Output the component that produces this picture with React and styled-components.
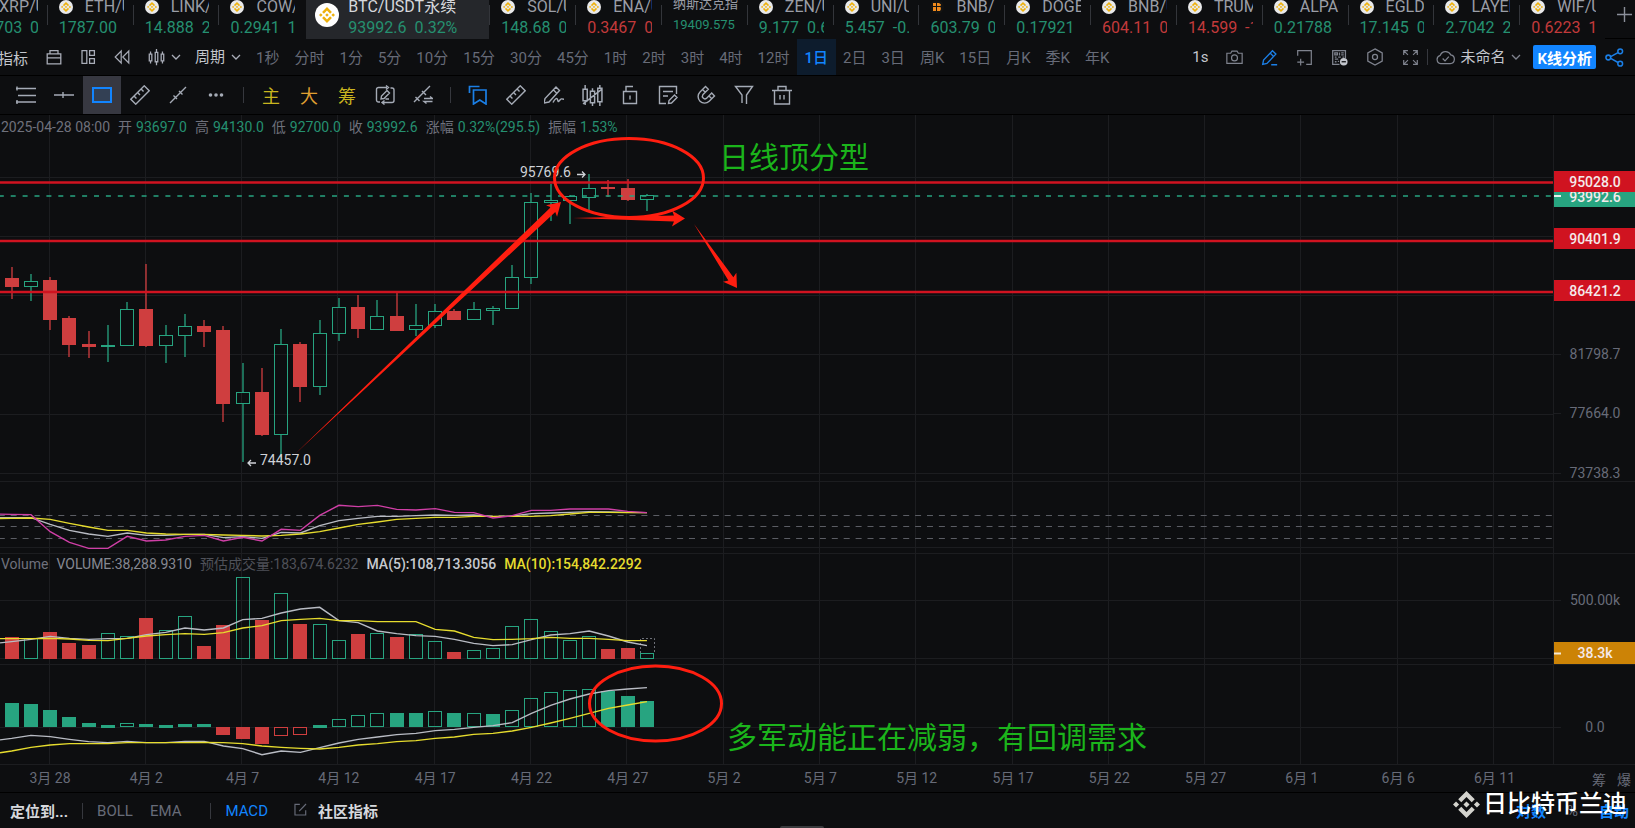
import React from 'react';
import styled, { createGlobalStyle } from 'styled-components';
import { SiBinance } from 'react-icons/si';

const GlobalStyle = createGlobalStyle`
    * {
        box-sizing: border-box;
    }

    body {
        margin: 0;
        background: #0d0e10;
        color: #8b8f9a;
        font-family: Roboto, "Noto Sans CJK SC", sans-serif;
        font-size: 14px;
        overflow-x: hidden;
    }

    button, select {
        margin: 0;
        padding: 0;
        border: 0;
        background: none;
        color: inherit;
        font: inherit;
        cursor: pointer;
    }
`;

const UP = '#27a480';
const DOWN = '#cf3e3f';
const GRID = '#1c1d20';
const MARK = '#ff1e10';
const LEVEL = '#d01320';

const Page = styled.div`
    position: relative;
    display: flex;
    flex-direction: column;
    min-height: 100vh;
    overflow: hidden;
`;

/* ---------- tickers ---------- */

const TickerBar = styled.nav`
    display: flex;
    height: 39px;
    overflow: hidden;
`;

const TickerList = styled.div`
    flex: 1;
    min-width: 0;
    display: flex;
    margin-left: -39px;
`;

const Ticker = styled.button`
    flex: 1 1 0;
    min-width: 0;
    display: flex;
    text-align: left;

    &::before {
        content: "";
        flex: none;
        width: 1px;
        height: 20px;
        margin: 5px 11px 0 0;
        background: #33353a;
    }
`;

const TickerBody = styled.span`
    flex: 1;
    min-width: 0;
    height: 39px;
    margin-right: 9px;
    overflow: hidden;
    display: flex;
    flex-direction: column;
    justify-content: flex-end;
    gap: 1px;
    padding-bottom: ${(p) => (p.$small ? '4px' : '1px')};
    font-size: ${(p) => (p.$small ? '13px' : '16px')};
    line-height: 20px;
    white-space: pre;
`;

const TickerName = styled.span`
    display: flex;
    gap: 12px;
    color: ${(p) => (p.$active ? '#d6d8dc' : '#9b9ea7')};
`;

const TickerPrice = styled.span`
    color: ${(p) => (p.$down ? '#c23a3b' : '#259070')};
`;

const ActiveTicker = styled.button`
    flex: none;
    width: 183px;
    margin-left: 2px;
    padding-left: 9px;
    display: flex;
    gap: 9px;
    background: #25272b;
    text-align: left;
`;

const Coin = styled.span`
    flex: none;
    display: flex;
    align-items: center;
    justify-content: center;
    width: ${(p) => p.$size}px;
    height: ${(p) => p.$size}px;
    border-radius: 50%;
    background: ${(p) => (p.$dark ? '#131313' : '#e9e9ea')};
    color: ${(p) => (p.$dark ? '#f08a1c' : '#eeb10c')};
`;

const SmallCoin = styled(Coin)`
    align-self: center;
`;

const ActiveCoin = styled(Coin)`
    margin-top: 3px;
    background: #fff;
`;

const AddButton = styled.button`
    width: 30px;
    display: flex;
    align-items: center;
    justify-content: center;
    padding: 0 0 9px 9px;
    border-bottom: 1px solid #000;
    color: #8b8f9a;
`;

/* ---------- toolbars ---------- */

const Toolbar = styled.div`
    display: flex;
    align-items: stretch;
    border-bottom: 1px solid #000;
`;

const PeriodBar = styled(Toolbar)`
    height: 37px;
    font-size: 15px;
`;

const DrawBar = styled(Toolbar)`
    height: 39px;
    padding-left: 7px;
`;

const BarGroup = styled.div`
    display: flex;
    align-items: center;
    gap: ${(p) => p.$gap || 0}px;
    margin-left: ${(p) => p.$left || 0}px;
    color: ${(p) => p.$color || '#a9adb8'};
    white-space: nowrap;
`;

const IconButton = styled.button`
    display: flex;
    align-items: center;
    gap: 6px;
    color: ${(p) => p.$color || 'inherit'};
`;

const Picker = styled.label`
    display: flex;
    align-items: center;
    gap: 5px;

    select {
        appearance: none;
        color: #c3c6cd;
    }
`;

const Period = styled.button`
    align-self: stretch;
    padding: 0 8px 2px 7px;
    color: ${(p) => (p.$active ? '#1285ff' : '#676b78')};
    background: ${(p) => (p.$active ? '#0d1c2d' : 'none')};
    font-weight: ${(p) => (p.$active ? 500 : 400)};
`;

const RightGroup = styled(BarGroup)`
    margin-left: auto;
    padding-right: 8px;
    font-size: 15px;
`;

const Analyse = styled.button`
    height: 24px;
    margin-left: 12px;
    margin-right: 9px;
    padding: 0 4px;
    border-radius: 2px;
    background: #1285ff;
    color: #fff;
    font-weight: 600;
`;

const Divider = styled.span`
    flex: none;
    width: 1px;
    height: 16px;
    background: #36383e;
    margin: 0 ${(p) => p.$gap}px;
`;

const Tool = styled.button`
    display: flex;
    align-items: center;
    justify-content: center;
    width: 38px;
    height: 38px;
    font-size: 18px;
    color: ${(p) => p.$color || '#a5abb6'};
    background: ${(p) => (p.$active ? '#373841' : 'none')};
`;

/* ---------- chart ---------- */

const Chart = styled.main`
    display: flex;
    flex-direction: column;
`;

const Panel = styled.section`
    position: relative;
    display: flex;
    height: ${(p) => p.$height}px;
    border-bottom: 1px solid ${GRID};
`;

const Plot = styled.svg`
    flex: 1;
    min-width: 0;
    width: 0;
    height: 100%;
    overflow: visible;
    font-size: 14px;
`;

const Axis = styled.svg`
    flex: none;
    width: 82px;
    height: 100%;
    border-left: 1px solid ${GRID};
    background: #0d0e10;
    font-size: 14px;
    fill: #676b78;
`;

const Legend = styled.div`
    position: absolute;
    top: ${(p) => p.$top || 0}px;
    left: 1px;
    display: flex;
    gap: 8px;
    line-height: 20px;
    color: #6f717c;
    white-space: nowrap;

    b {
        margin-left: 4px;
        font-weight: 400;
        color: #259070;
    }
`;

const LegendItem = styled.span`
    color: ${(p) => p.$color || 'inherit'};
    font-weight: ${(p) => (p.$strong ? 500 : 400)};
`;

const TimeAxis = styled.div`
    display: flex;
    height: 28px;
    border-bottom: 1px solid #000;
`;

const TimeTools = styled.div`
    flex: none;
    width: 82px;
    display: flex;
    align-items: center;
    justify-content: flex-end;
    gap: 11px;
    padding-right: 4px;
    color: #676b78;
`;

/* ---------- bottom bar ---------- */

const BottomBar = styled.footer`
    display: flex;
    align-items: center;
    height: 35px;
    padding: 0 6px 0 10px;
    font-size: 15px;
`;

const BottomButton = styled.button`
    margin-right: ${(p) => p.$right || 0}px;
    color: ${(p) => p.$color || '#676b78'};
    font-weight: ${(p) => (p.$bold ? 700 : 400)};
`;

const BottomRight = styled.div`
    display: flex;
    gap: 21px;
    margin-left: auto;
`;

const Handle = styled.span`
    position: absolute;
    bottom: 0;
    left: 50%;
    width: 44px;
    height: 2px;
    margin-left: -38px;
    border-radius: 2px 2px 0 0;
    background: #3a3b3e;
`;

const Watermark = styled.div`
    position: absolute;
    right: 8px;
    bottom: 6px;
    display: flex;
    align-items: center;
    gap: 3px;
    color: #fff;
    font-size: 24px;
    font-weight: 500;
    line-height: 36px;
    pointer-events: none;

    svg {
        color: #d3d3cd;
    }
`;

const Icon = ({ size = 20, w = 1.4, children }) => (
    <svg width={size} height={size} viewBox="0 0 20 20" fill="none" stroke="currentColor" strokeWidth={w}>
        {children}
    </svg>
);

const Chevron = () => (
    <svg width="10" height="6" viewBox="0 0 10 6" fill="none" stroke="currentColor" strokeWidth="1.3">
        <path d="M1 1l4 4 4-4" />
    </svg>
);

const Ruler = () => (
    <Icon>
        <g transform="rotate(-45 10 10)">
            <rect x="0.5" y="6.5" width="19" height="7" />
            <path d="M5 6.5v3.5M10 6.5v3.5M15 6.5v3.5" />
        </g>
    </Icon>
);

const tickers = [
    { name: 'XRP/USDT', price: '2.2703  0.21%' },
    { name: 'ETH/USDT', price: '1787.00' },
    { name: 'LINK/USDT', price: '14.888  2.1%' },
    { name: 'COW/USDT', price: '0.2941  1.2%' },
    { name: 'BTC/USDT永续', price: '93992.6  0.32%', active: true },
    { name: 'SOL/USDT', price: '148.68  0.4%' },
    { name: 'ENA/USDT', price: '0.3467  0.8%', down: true },
    { name: '纳斯达克指数', price: '19409.575', small: true },
    { name: 'ZEN/USDT', price: '9.177  0.6%' },
    { name: 'UNI/USDT', price: '5.457  -0.3%' },
    { name: 'BNB/USDT', price: '603.79  0.1%', dark: true },
    { name: 'DOGE/USDT', price: '0.17921' },
    { name: 'BNB/USDT', price: '604.11  0.1%', down: true },
    { name: 'TRUMP/USDT', price: '14.599  -1%', down: true },
    { name: 'ALPACA/USDT', price: '0.21788' },
    { name: 'EGLD/USDT', price: '17.145  0.9%' },
    { name: 'LAYER/USDT', price: '2.7042  2.6%' },
    { name: 'WIF/USDT', price: '0.6223  1.7%', down: true },
];

const periods = [
    '1秒', '分时', '1分', '5分', '10分', '15分', '30分', '45分', '1时', '2时', '3时', '4时', '12时',
    '1日', '2日', '3日', '周K', '15日', '月K', '季K', '年K',
];

const STEP = 19.25;
const cx = (i) => 11.7 + i * STEP;

// [direction, high, body top, body bottom, low]
const candles = [
    [-1, 152, 163, 172, 184], [1, 159, 166, 172, 186], [-1, 162, 165, 205, 215], [-1, 201, 203, 230, 242],
    [-1, 216, 229, 232, 243], [1, 210, 230, 232, 247], [1, 187, 194, 231, 231], [-1, 149, 194, 231, 232],
    [1, 210, 220, 231, 248], [1, 199, 211, 221, 242], [-1, 205, 211, 217, 232], [-1, 211, 215, 289, 307],
    [1, 248, 277, 289, 347], [-1, 253, 277, 320, 321], [1, 214, 229, 320, 345], [-1, 227, 229, 272, 287],
    [1, 205, 218, 272, 280], [1, 183, 192, 219, 226], [-1, 180, 192, 214, 223], [1, 185, 201, 215, 215],
    [-1, 178, 201, 216, 216], [1, 189, 210, 215, 221], [1, 189, 196, 211, 213], [-1, 194, 196, 205, 205],
    [1, 187, 194, 205, 205], [1, 191, 193, 196, 210], [1, 150, 162, 194, 194], [1, 78, 87, 163, 169],
    [1, 69, 85, 88, 106], [1, 80, 81, 86, 109], [1, 59, 73, 83, 95], [-1, 65, 72, 74, 82],
    [-1, 64, 73, 85, 86], [1, 79, 80, 85, 96],
];

// the indicator series below share one scale, three units to a pixel
const toY = (v, top) => v / 3 - top;

const kdj = {
    j: [118, 119, 170, 202, 220, 220, 184, 198, 195, 184, 181, 198, 187, 198, 163, 166, 121, 91, 95, 91, 103, 105, 101, 112, 113, 129, 122, 106, 106, 102, 102, 102, 109, 113],
    k: [128, 128, 148, 166, 177, 184, 174, 181, 181, 178, 178, 188, 185, 190, 172, 174, 152, 137, 130, 124, 124, 122, 120, 121, 120, 125, 123, 116, 114, 112, 110, 111, 112, 113],
    d: [130, 129, 133, 145, 156, 166, 166, 174, 177, 178, 178, 180, 181, 183, 181, 177, 170, 159, 148, 141, 133, 130, 127, 127, 124, 124, 124, 124, 122, 117, 112, 112, 113, 113],
};

const volume = {
    bars: [485, 490, 470, 503, 510, 475, 482, 428, 466, 424, 514, 450, 307, 435, 353, 447, 448, 496, 478, 475, 485, 476, 499, 531, 524, 518, 454, 433, 467, 496, 482, 523, 520, 535],
    ma5: [500, 493, 484, 490, 493, 491, 490, 479, 472, 459, 465, 459, 434, 430, 414, 402, 397, 437, 443, 468, 476, 482, 484, 493, 505, 512, 509, 494, 480, 476, 468, 483, 501, 512],
    ma10: [491, 491, 490, 492, 496, 497, 490, 483, 479, 476, 478, 473, 459, 452, 437, 433, 430, 437, 437, 440, 440, 440, 463, 468, 487, 494, 493, 491, 487, 490, 490, 493, 497, 497],
};

const macd = {
    // [direction, top, bottom, filled]
    bars: [
        [1, 684, 755, 1], [1, 688, 755, 1], [1, 705, 755, 1], [1, 727, 755, 1], [1, 745, 755, 1], [1, 750, 759, 1],
        [1, 745, 755, 0], [1, 748, 756, 1], [1, 750, 759, 1], [1, 748, 756, 1], [1, 748, 756, 1], [-1, 755, 780, 1],
        [-1, 755, 792, 1], [-1, 755, 808, 1], [-1, 755, 783, 0], [-1, 755, 779, 0], [1, 750, 759, 1], [1, 732, 755, 0],
        [1, 720, 755, 0], [1, 713, 755, 0], [1, 713, 755, 1], [1, 713, 755, 1], [1, 709, 755, 0], [1, 713, 755, 1],
        [1, 714, 755, 0], [1, 717, 755, 1], [1, 706, 755, 0], [1, 670, 755, 0], [1, 652, 755, 0], [1, 646, 755, 0],
        [1, 642, 755, 0], [1, 648, 755, 1], [1, 663, 755, 1], [1, 678, 755, 1],
    ],
    dif: [790, 781, 785, 793, 800, 803, 799, 803, 803, 799, 799, 813, 821, 839, 828, 832, 818, 804, 793, 786, 779, 775, 767, 763, 757, 752, 743, 715, 691, 672, 657, 647, 642, 638],
    dea: [828, 817, 810, 806, 806, 806, 803, 803, 803, 803, 802, 803, 806, 813, 817, 820, 822, 817, 810, 806, 800, 797, 790, 786, 778, 775, 768, 757, 744, 730, 715, 700, 690, 680],
};

const dates = [
    '3月 28', '4月 2', '4月 7', '4月 12', '4月 17', '4月 22', '4月 27', '5月 2', '5月 7', '5月 12',
    '5月 17', '5月 22', '5月 27', '6月 1', '6月 6', '6月 11',
];

const Grid = ({ rows }) => (
    <g stroke={GRID} shapeRendering="crispEdges">
        {dates.map((d, i) => (
            <line key={d} x1={49 + i * 96.3} x2={49 + i * 96.3} y1="0" y2="100%" />
        ))}
        {rows.map((y) => (
            <line key={y} x1="0" x2="100%" y1={y} y2={y} />
        ))}
    </g>
);

const Line = ({ values, top, color }) => (
    <polyline
        fill="none"
        stroke={color}
        strokeWidth="1.4"
        points={[`0,${toY(values[0] + (values[0] - values[1]) / 2, top)}`]
            .concat(values.map((v, i) => `${cx(i)},${toY(v, top)}`))
            .join(' ')}
    />
);

const Bar = ({ i, y1, y2, up, filled }) => (
    <rect
        x={Math.round(cx(i) - 7) + (filled ? 0 : 0.5)}
        y={y1 + (filled ? 0 : 0.5)}
        width={filled ? 14 : 13}
        height={Math.max(y2 - y1 - (filled ? 0 : 1), 1)}
        fill={filled ? (up ? UP : DOWN) : 'none'}
        stroke={filled ? 'none' : up ? UP : DOWN}
    />
);

const Candle = ({ i, data: [dir, high, top, bottom, low] }) => {
    const color = dir > 0 ? UP : DOWN;
    const x = Math.round(cx(i) - 7) + 7;
    return (
        <g>
            <path d={`M${x} ${high}V${top}M${x} ${bottom}V${low}`} stroke={color} strokeWidth="1.3" />
            <Bar i={i} y1={top} y2={bottom} up={dir > 0} filled={dir < 0 || bottom - top < 3} />
        </g>
    );
};

// tapered arrow: a point at the tail, widening towards the head
const Arrow = ({ from, to, head = 13, wing = 8, neck = 3 }) => {
    const len = Math.hypot(to[0] - from[0], to[1] - from[1]);
    const ux = (to[0] - from[0]) / len;
    const uy = (to[1] - from[1]) / len;
    const at = (back, side) => `${to[0] - ux * back - uy * side},${to[1] - uy * back + ux * side}`;
    return (
        <polygon
            fill={MARK}
            points={[from.join(','), at(head - 2, neck), at(head, wing), to.join(','), at(head, -wing), at(head - 2, -neck)].join(' ')}
        />
    );
};

const Tag = ({ y, height = 21, color, text }) => (
    <g>
        <rect x="-1" y={y} width="83" height={height} fill={color} />
        <text x="41" y={y + height / 2 + 5} textAnchor="middle" fill="#f4e9ea" fontWeight="500">
            {text}
        </text>
    </g>
);

const AxisLabel = ({ y, children }) => (
    <g>
        <line x1="0" x2="7" y1={y} y2={y} stroke={GRID} shapeRendering="crispEdges" />
        <text x="41" y={y + 5} textAnchor="middle">
            {children}
        </text>
    </g>
);

const Tickers = () => (
    <TickerBar aria-label="行情">
        <TickerList>
            {tickers.map((t, i) =>
                t.active ? (
                    <ActiveTicker key={i}>
                        <ActiveCoin $size={24}>
                            <SiBinance size={16} />
                        </ActiveCoin>
                        <TickerBody>
                            <TickerName $active>{t.name}</TickerName>
                            <TickerPrice>{t.price}</TickerPrice>
                        </TickerBody>
                    </ActiveTicker>
                ) : (
                    <Ticker key={i}>
                        <TickerBody $small={t.small}>
                            <TickerName>
                                {!t.small && (
                                    <SmallCoin $size={14} $dark={t.dark}>
                                        {t.dark ? (
                                            <svg width="8" height="8" viewBox="0 0 8 8" fill="currentColor">
                                                <path d="M0 0h3v3H0zM4 0h2l2 1.500L7.500 3H4zM0 4h3v4H0zM4 4h3.500L8 6 7 8H4z" />
                                            </svg>
                                        ) : (
                                            <SiBinance size={10} />
                                        )}
                                    </SmallCoin>
                                )}
                                {t.name}
                            </TickerName>
                            <TickerPrice $down={t.down}>{t.price}</TickerPrice>
                        </TickerBody>
                    </Ticker>
                )
            )}
        </TickerList>
        <AddButton aria-label="添加">
            <svg width="15" height="15" viewBox="0 0 15 15" stroke="currentColor" strokeWidth="1.4">
                <path d="M7.500 0v15M0 7.500h15" />
            </svg>
        </AddButton>
    </TickerBar>
);

const Periods = () => (
    <PeriodBar>
        <BarGroup $gap={18} $left={-2}>
            <IconButton $color="#c3c6cd">指标</IconButton>
            <IconButton aria-label="模板">
                <Icon size={16} w={1.6}>
                    <path d="M1.500 6h17v12.500h-17zM5 6V2h10v4M1.500 11h17" />
                </Icon>
            </IconButton>
            <IconButton aria-label="布局">
                <Icon size={16} w={1.6}>
                    <path d="M2.500 2h6v16h-6zM12 2h6v6h-6zM12 12h6v6h-6z" />
                </Icon>
            </IconButton>
            <IconButton aria-label="回放">
                <Icon size={16} w={1.5}>
                    <path d="M9 2.500v15L1.500 10zM18.500 2.500v15L11 10z" />
                </Icon>
            </IconButton>
            <IconButton aria-label="图表类型">
                <Icon size={17} w={1.5}>
                    <path d="M3 3v3M3 14v3M1.500 6h3v8h-3zM10 0v4M10 15v4M8.500 4h3v11h-3zM17 3v3M17 14v3M15.500 6h3v8h-3z" />
                </Icon>
                <Chevron />
            </IconButton>
        </BarGroup>
        <BarGroup $left={14}>
            <Picker>
                <select aria-label="周期">
                    <option>周期</option>
                </select>
                <Chevron />
            </Picker>
        </BarGroup>
        <BarGroup $left={8}>
            {periods.map((p) => (
                <Period key={p} $active={p === '1日'}>
                    {p}
                </Period>
            ))}
        </BarGroup>
        <RightGroup $gap={18} $color="#7f838e">
            <IconButton $color="#c3c6cd">1s</IconButton>
            <IconButton aria-label="截图">
                <Icon size={17}>
                    <path d="M1 5h4.500L7 2.500h6L14.500 5H19v12H1z" />
                    <circle cx="10" cy="10.500" r="3.500" />
                </Icon>
            </IconButton>
            <IconButton aria-label="画线" $color="#1b7fe6">
                <Icon size={17} w={1.6}>
                    <path d="M2 18l1-5L13.500 2l4 4L7 17zM11 5l4 4M12 18.500h7" />
                </Icon>
            </IconButton>
            <IconButton aria-label="新窗口">
                <Icon size={17}>
                    <path d="M2 8V2h16v16h-6M5.500 11.500v8M1.500 15.500h8" />
                </Icon>
            </IconButton>
            <IconButton aria-label="数据">
                <Icon size={17} w={1.5}>
                    <path d="M10 18H2V2h15v9M4.500 4.500h3v2.500h-3zM10 4v3.500M12 4.500h3M12 7h3M4.500 9.500h2M8.500 9.500h3M13.500 9.500h2M4.500 12h4M4.500 15h2M8 14.500h1.500" />
                    <circle cx="15" cy="15" r="4.500" fill="#c3c6cd" stroke="none" />
                    <path d="M12.500 15h5" stroke="#0d0e10" />
                </Icon>
            </IconButton>
            <IconButton aria-label="设置">
                <Icon size={18}>
                    <path d="M10 1l8 4.500v9L10 19l-8-4.500v-9z" />
                    <circle cx="10" cy="10" r="2.800" />
                </Icon>
            </IconButton>
            <IconButton aria-label="全屏">
                <Icon size={17}>
                    <path d="M2 7V2h5M2 2l5 5M13 2h5v5M18 2l-5 5M2 13v5h5M2 18l5-5M18 13v5h-5M18 18l-5-5" />
                </Icon>
            </IconButton>
        </RightGroup>
        <BarGroup>
            <Divider $gap={0} />
        </BarGroup>
        <BarGroup $left={8} $color="#7f838e">
            <Picker>
                <Icon size={19} w={1.3}>
                    <path d="M5 16.500a4.500 4.500 0 0 1-.5-8.800 6 6 0 0 1 11-.5 4.700 4.700 0 0 1-.5 9.300zM7 11l2.500 2.500 4-4.500" />
                </Icon>
                <select aria-label="布局名称">
                    <option>未命名</option>
                </select>
                <Chevron />
            </Picker>
            <Analyse>K线分析</Analyse>
            <IconButton aria-label="分享" $color="#1b7fe6">
                <Icon size={19} w={1.6}>
                    <circle cx="3.500" cy="10" r="2.500" />
                    <circle cx="16" cy="3.500" r="2.500" />
                    <circle cx="16" cy="16.500" r="2.500" />
                    <path d="M6 9l7.700-4.200M6 11l7.700 4.300" />
                </Icon>
            </IconButton>
        </BarGroup>
        <BarGroup $left={11} />
    </PeriodBar>
);

const DrawTools = () => (
    <DrawBar>
        <Tool aria-label="列表">
            <Icon>
                <path d="M0 3.500h20M2 10.500h18M0 17h20M1 1.500v4M1 15v4" />
            </Icon>
        </Tool>
        <Tool aria-label="水平线">
            <Icon>
                <path d="M0 10h20M9 7v6" />
            </Icon>
        </Tool>
        <Tool aria-label="矩形" $active $color="#1285ff">
            <Icon w={2}>
                <rect x="1" y="3" width="18" height="14" fill="#1285ff" fillOpacity="0.1" />
            </Icon>
        </Tool>
        <Tool aria-label="尺子">
            <Ruler />
        </Tool>
        <Tool aria-label="趋势线">
            <Icon>
                <path d="M2 18l5-5M13 7l5-5M7 13l6-6M5.500 10.500L9 14M11 6l3.500 3.500" />
            </Icon>
        </Tool>
        <Tool aria-label="更多">
            <Icon>
                <g fill="currentColor" stroke="none">
                    <circle cx="4.500" cy="10" r="1.800" />
                    <circle cx="10" cy="10" r="1.800" />
                    <circle cx="15.500" cy="10" r="1.800" />
                </g>
            </Icon>
        </Tool>
        <BarGroup>
            <Divider $gap={8} />
        </BarGroup>
        <Tool $color="#c9b51f">主</Tool>
        <Tool $color="#e0a032">大</Tool>
        <Tool $color="#c9b51f">筹</Tool>
        <Tool aria-label="连续绘制">
            <Icon>
                <path d="M5 17H3.500a2 2 0 0 1-2-2V4.500a2 2 0 0 1 2-2H12M11 .5l2.500 2L11 4.500M15.500 3H17a2 2 0 0 1 2 2v10.500a2 2 0 0 1-2 2H8M9.500 15.500l-2.500 2 2.500 2M6 14l.5-3L12 5.500l2.500 2.500L9 13.500zM10.500 14H14" />
            </Icon>
        </Tool>
        <Tool aria-label="切换画线">
            <Icon>
                <path d="M1 17L17 1M2.500 12l4 4M9 6l4 4M11 13.500h8.500l-2.500-2M19.500 16.500H11l2.500 2" />
            </Icon>
        </Tool>
        <BarGroup>
            <Divider $gap={8} />
        </BarGroup>
        <Tool aria-label="收藏" $color="#1b7fe6">
            <Icon w={1.7}>
                <path d="M1.500 8V1.500h10M5.500 5h12.500v14l-6.200-4-6.300 4z" />
            </Icon>
        </Tool>
        <Tool aria-label="测量">
            <Ruler />
        </Tool>
        <Tool aria-label="画笔">
            <Icon>
                <path d="M0 18l1-4.500L12 2l3.500 3.500L5 17zM9.500 5l3 3M9 17.500c2-4 4-5 4.500-3s.5 3 2 1 2-2 5-1" />
            </Icon>
        </Tool>
        <Tool aria-label="形态">
            <Icon size={21}>
                <path d="M3 0v4M3 15v4M1 4h4v11H1zM10 3v3M10 17v3M8 6h4v11H8zM17 0v3M17 16v4M15 3h4v13h-4zM1 18L19 4" />
            </Icon>
        </Tool>
        <Tool aria-label="锁定">
            <Icon>
                <path d="M3.500 6.500h13v12h-13zM6 6.500v-5h7M10 10.500v4" />
            </Icon>
        </Tool>
        <Tool aria-label="笔记">
            <Icon>
                <path d="M8 18.500H1.500v-17h17V9M5 6.500h10M5 11h5M10.500 18.500l.5-3 5.500-5.500 2.500 2.500-5.500 5.500z" />
            </Icon>
        </Tool>
        <Tool aria-label="磁吸">
            <Icon>
                <path d="M9.500 1.500L4 7a6.500 6.500 0 0 0 9.200 9.200l5.300-5.300-2.800-2.800-5.300 5.300a2.600 2.600 0 0 1-3.600-3.600l5.500-5.500zM6.500 4.500l2.800 2.800M13 11l2.800 2.800" />
            </Icon>
        </Tool>
        <Tool aria-label="筛选">
            <Icon>
                <path d="M8 18v-8L1.500 1.500h17L12.500 10v9" />
            </Icon>
        </Tool>
        <Tool aria-label="删除">
            <Icon>
                <path d="M0 5.500h20M2.500 5.500V19h15V5.500M6 5.500v-4h8v4M8 10v4.500M12 10v4.500" />
            </Icon>
        </Tool>
    </DrawBar>
);

const PricePanel = () => (
    <Panel $height={367}>
        <Plot>
            <Grid rows={[62, 121, 180, 239, 299, 358]} />
            {candles.map((c, i) => (
                <Candle key={i} i={i} data={c} />
            ))}
            <line x1="0" x2="100%" y1="81" y2="81" stroke={UP} strokeWidth="2" strokeDasharray="5 6.900" strokeDashoffset="1.200" opacity="0.75" />
            <g stroke={LEVEL} strokeWidth="2.600">
                <line x1="0" x2="100%" y1="67.500" y2="67.500" />
                <line x1="0" x2="100%" y1="126" y2="126" />
                <line x1="0" x2="100%" y1="177" y2="177" />
            </g>
            <g fill="#cfd2d7" stroke="none">
                <text x="520" y="62">95769.6</text>
                <text x="260" y="350">74457.0</text>
                <path d="M577 59.500h8M582 56.500l3 3-3 3M256 348h-8M251 345l-3 3 3 3" fill="none" stroke="#cfd2d7" strokeWidth="1.300" />
            </g>
            <ellipse cx="629" cy="63" rx="74.500" ry="39.500" fill="none" stroke={MARK} strokeWidth="3" />
            <Arrow from={[294, 340]} to={[561, 87]} neck={3.3} />
            <Arrow from={[573, 103]} to={[685, 103.5]} />
            <Arrow from={[694, 109]} to={[737, 173]} />
            <text x="719" y="53" fill="#1bb41b" fontSize="30">
                日线顶分型
            </text>
        </Plot>
        <Axis>
            <line x1="0" x2="7" y1="62" y2="62" stroke={GRID} />
            <AxisLabel y={239}>81798.7</AxisLabel>
            <AxisLabel y={298}>77664.0</AxisLabel>
            <AxisLabel y={358}>73738.3</AxisLabel>
            <Tag y={71} color={UP} text="93992.6" />
            <path d="M0 81h7" stroke="#e6f2ee" strokeWidth="2" />
            <Tag y={56} color={LEVEL} text="95028.0" />
            <Tag y={113} color={LEVEL} text="90401.9" />
            <Tag y={165} color={LEVEL} text="86421.2" />
        </Axis>
        <Legend $top={2}>
            <span>2025-04-28 08:00</span>
            <span>开<b>93697.0</b></span>
            <span>高<b>94130.0</b></span>
            <span>低<b>92700.0</b></span>
            <span>收<b>93992.6</b></span>
            <span>涨幅<b>0.32%(295.5)</b></span>
            <span>振幅<b>1.53%</b></span>
        </Legend>
    </Panel>
);

const KdjPanel = () => (
    <Panel $height={72}>
        <Plot>
            <Grid rows={[65]} />
            {[33.5, 44.5, 56.5].map((y) => (
                <line key={y} x1="0" x2="100%" y1={y} y2={y} stroke="#5b5d64" strokeDasharray="6 5.900" strokeDashoffset="1.200" />
            ))}
            <Line values={kdj.k} top={7} color="#b9bcc4" />
            <Line values={kdj.d} top={7} color="#e6dc2e" />
            <Line values={kdj.j} top={7} color="#cf3fa6" />
        </Plot>
        <Axis />
    </Panel>
);

const VolumePanel = () => (
    <Panel $height={111}>
        <Plot>
            <Grid rows={[46, 104]} />
            {volume.bars.map((v, i) => (
                <Bar key={i} i={i} y1={Math.round(toY(v, 79))} y2={105} up={candles[i][0] > 0} filled={candles[i][0] < 0} />
            ))}
            <path d="M640.500 99V84.500h14V99" fill="none" stroke="#6d7078" strokeDasharray="2 2" />
            <Line values={volume.ma5} top={79} color="#b9bcc4" />
            <Line values={volume.ma10} top={79} color="#e6dc2e" />
        </Plot>
        <Axis>
            <AxisLabel y={46}>500.00k</AxisLabel>
            <line x1="0" x2="82" y1="104" y2="104" stroke={GRID} />
            <Tag y={88} height={22} color="#cc8306" text="38.3k" />
            <path d="M0 99.500h7" stroke="#f6ead4" strokeWidth="2" />
        </Axis>
        <Legend>
            <LegendItem>Volume</LegendItem>
            <LegendItem $color="#858892">VOLUME:38,288.9310</LegendItem>
            <LegendItem $color="#4f5159">预估成交量:183,674.6232</LegendItem>
            <LegendItem $strong $color="#c6c9cf">MA(5):108,713.3056</LegendItem>
            <LegendItem $strong $color="#e6dc2e">MA(10):154,842.2292</LegendItem>
        </Legend>
    </Panel>
);

const MacdPanel = () => (
    <Panel $height={100}>
        <Plot>
            <Grid rows={[62]} />
            {macd.bars.map(([dir, top, bottom, filled], i) => (
                <Bar key={i} i={i} y1={Math.round(toY(top, 190))} y2={Math.round(toY(bottom, 190))} up={dir > 0} filled={filled} />
            ))}
            <Line values={macd.dif} top={190} color="#b9bcc4" />
            <Line values={macd.dea} top={190} color="#e6dc2e" />
            <ellipse cx="655.500" cy="38.500" rx="66" ry="37.500" fill="none" stroke={MARK} strokeWidth="3" />
            <text x="727" y="83" fill="#1bb41b" fontSize="30">
                多军动能正在减弱，有回调需求
            </text>
        </Plot>
        <Axis>
            <AxisLabel y={62}>0.0</AxisLabel>
        </Axis>
    </Panel>
);

const App = () => {
    return (
        <Page>
            <GlobalStyle />
            <Tickers />
            <Periods />
            <DrawTools />
            <Chart>
                <PricePanel />
                <KdjPanel />
                <VolumePanel />
                <MacdPanel />
                <TimeAxis>
                    <Plot fill="#676b78">
                        {dates.map((d, i) => (
                            <text key={d} x={50 + i * 96.3} y="18" textAnchor="middle">
                                {d}
                            </text>
                        ))}
                    </Plot>
                    <TimeTools>
                        <button>筹</button>
                        <button>爆</button>
                    </TimeTools>
                </TimeAxis>
            </Chart>
            <BottomBar>
                <BottomButton $bold $color="#d6d8dc">定位到...</BottomButton>
                <Divider $gap={14} />
                <BottomButton $right={17}>BOLL</BottomButton>
                <BottomButton $right={15}>EMA</BottomButton>
                <Divider $gap={14} />
                <BottomButton $color="#1285ff" $right={26}>MACD</BottomButton>
                <BottomButton $right={11} aria-label="编辑指标">
                    <Icon size={13} w={1.8}>
                        <path d="M9 2H1.500v16.500H18V11M8 12.500L18.500 1.500" />
                    </Icon>
                </BottomButton>
                <BottomButton $bold $color="#d6d8dc">社区指标</BottomButton>
                <BottomRight>
                    <BottomButton $bold $color="#1285ff">对数</BottomButton>
                    <BottomButton>%</BottomButton>
                    <BottomButton $bold $color="#1285ff">自动</BottomButton>
                </BottomRight>
            </BottomBar>
            <Handle />
            <Watermark>
                <SiBinance size={27} />
                日比特币兰迪
            </Watermark>
        </Page>
    );
};

export default App;
